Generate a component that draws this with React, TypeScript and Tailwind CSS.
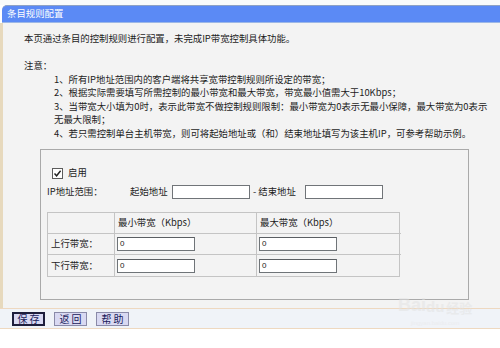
import React from "react";

const font = "font-['SimSun','Noto_Sans_CJK_SC',sans-serif]";

function Btn({ label, focused }: { label: string; focused?: boolean }) {
  return (
    <button
      className={`h-[14px] w-[33px] flex items-center justify-center bg-[#d9d9f2] text-[#1a1a5a] text-[10px] leading-none whitespace-pre ${
        focused ? "border-2 border-[#1e1e3c]" : "border border-[#8a8aa8]"
      }`}
    >
      {label}
    </button>
  );
}

function SmallInput() {
  return (
    <div className="w-[78px] h-[14px] bg-white border border-[#6f7478] border-t-[#5a5e62] flex items-center pl-[2px] font-['Liberation_Sans',sans-serif] text-[8px] text-[#222]">
      0
    </div>
  );
}

function AddrInput() {
  return <div className="w-[78px] h-[14px] bg-white border border-[#707478]" />;
}

export default function App() {
  return (
    <div
      className={`relative w-[500px] h-[348px] bg-white overflow-hidden text-[9.4px] leading-[13.5px] text-[#1c1c1c] ${font}`}
    >
      <div className="h-[5px] bg-[#f9fbfb]" />
      <div className="h-[18px] ml-[2px] rounded-tl-[5px] bg-[#5b8af5] border-t border-t-[#8ea2c4] border-b border-b-[#9cb7e6] flex items-center pl-[5px] text-white text-[9.4px]">
        条目规则配置
      </div>
      <div className="h-[285px] border-l-[3px] border-l-[#e7d9bd] bg-[#f3f3f3] pt-[9px]">
        <div className="pl-[21px]">本页通过条目的控制规则进行配置，未完成IP带宽控制具体功能。</div>
        <div className="pl-[21px] mt-[13.5px]">注意：</div>
        <div className="pl-[51px]">
          <div>1、所有IP地址范围内的客户端将共享宽带控制规则所设定的带宽；</div>
          <div>2、根据实际需要填写所需控制的最小带宽和最大带宽，带宽最小值需大于10Kbps；</div>
          <div>3、当带宽大小填为0时，表示此带宽不做控制规则限制：最小带宽为0表示无最小保障，最大带宽为0表示</div>
          <div>无最大限制；</div>
          <div>4、若只需控制单台主机带宽，则可将起始地址或（和）结束地址填写为该主机IP，可参考帮助示例。</div>
        </div>
        <div className="ml-[37px] mt-[9px] w-[429px] h-[151px] border border-[#a9a9a9] flex flex-col">
          <div className="h-[17px]" />
          <div className="h-[12px] flex items-center pl-[11px]">
            <div className="w-[11px] h-[11px] border border-[#5c5c5c] bg-white flex items-center justify-center">
              <svg width="9" height="9" viewBox="0 0 9 9">
                <path d="M1.5 4.5 L3.6 6.8 L7.6 1.8" fill="none" stroke="#222" strokeWidth="1.4" />
              </svg>
            </div>
            <span className="ml-[5px]">启用</span>
          </div>
          <div className="h-[17px] mt-[4px] flex items-center pl-[6px]">
            <span className="w-[83px]">IP地址范围：</span>
            <span className="w-[42px]">起始地址</span>
            <AddrInput />
            <span className="ml-[3px] w-[52px]">- 结束地址</span>
            <AddrInput />
          </div>
          <div className="ml-[6px] mt-[12px] w-[353px] grid grid-cols-[67px_142px_144px] grid-rows-[21px_21px_21px] border border-[#c4c4c4]">
            <div className="border-r border-b border-[#c4c4c4]" />
            <div className="border-r border-b border-[#c4c4c4] flex items-center pl-[3px]">最小带宽（Kbps）</div>
            <div className="border-b border-[#c4c4c4] flex items-center pl-[3px]">最大带宽（Kbps）</div>
            <div className="border-r border-b border-[#c4c4c4] flex items-center pl-[3px]">上行带宽：</div>
            <div className="border-r border-b border-[#c4c4c4] flex items-center pl-[2px]"><SmallInput /></div>
            <div className="border-b border-[#c4c4c4] flex items-center pl-[2px]"><SmallInput /></div>
            <div className="border-r border-[#c4c4c4] flex items-center pl-[3px]">下行带宽：</div>
            <div className="border-r border-[#c4c4c4] flex items-center pl-[2px]"><SmallInput /></div>
            <div className="flex items-center pl-[2px]"><SmallInput /></div>
          </div>
        </div>
      </div>
      <div className="h-[21px] border-t border-b border-[#eed8c0] bg-[#f0f3f8] flex items-center gap-[9px] pl-[12px]">
        <Btn label="保 存" focused />
        <Btn label="返 回" />
        <Btn label="帮 助" />
      </div>
      <div className="absolute left-[398px] top-[296px] flex flex-col items-center pointer-events-none opacity-50">
        <div className="flex items-end text-[#e2e2e2] font-['Liberation_Sans',sans-serif] font-bold text-[18px] leading-none">
          Bai<span className="text-[15px]">du</span>
          <span className="ml-[2px] text-[13px] font-['Noto_Sans_CJK_SC',sans-serif]">经验</span>
        </div>
        <div className="text-[#e8e8e8] text-[6px] leading-none mt-[6px] font-['Liberation_Sans',sans-serif]">jingyan.baidu.com</div>
      </div>
    </div>
  );
}
